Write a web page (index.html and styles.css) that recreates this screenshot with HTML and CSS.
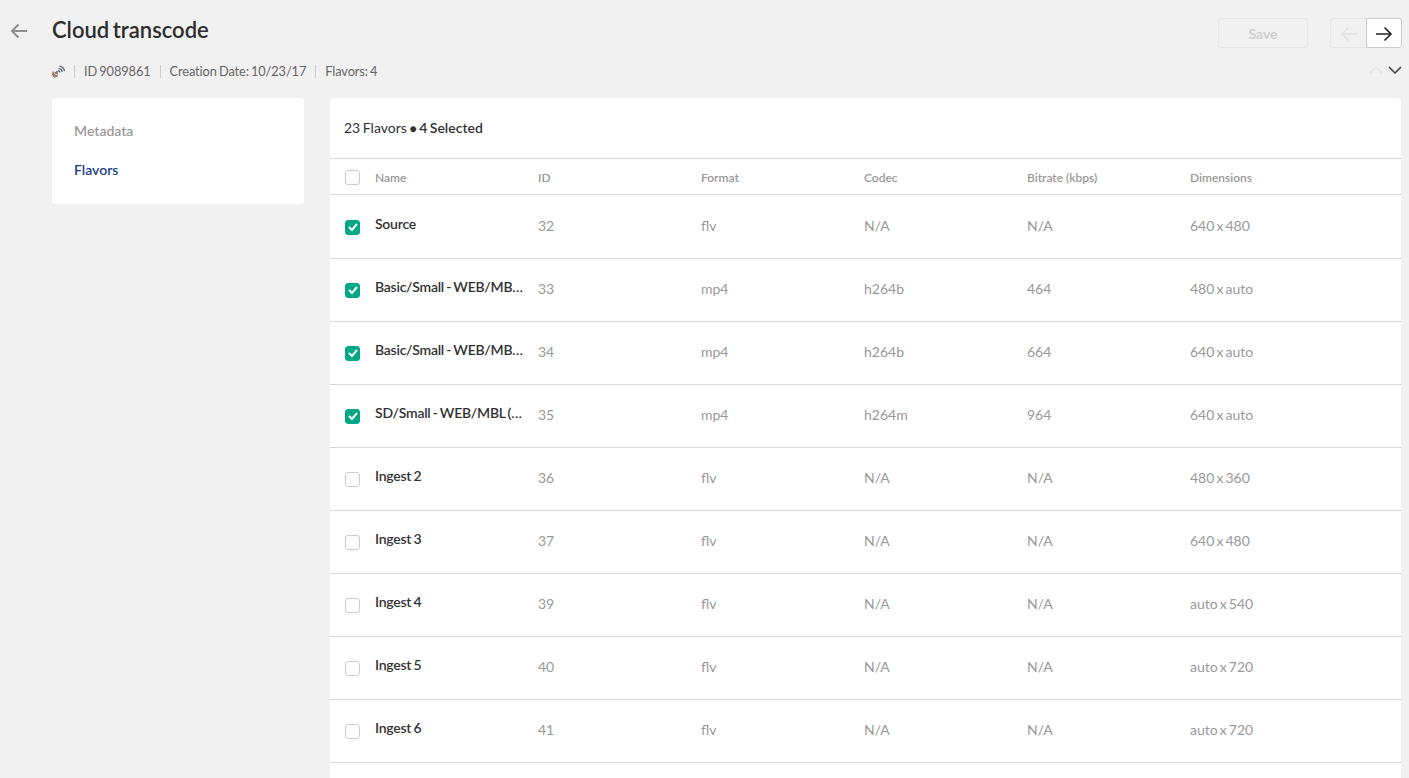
FILE: index.html
```html
<!DOCTYPE html>
<html lang="en">
<head>
    <meta charset="UTF-8">
    <title>Cloud transcode</title>
    <link rel="stylesheet" href="styles.css">
</head>
<body>
    <div class="page">
        <a class="back-link">
            <svg width="18" height="16" viewBox="0 0 18 16"><path d="M17 8H2M8.500 1.500 2 8l6.500 6.500" fill="none" stroke="#8f8f8f" stroke-width="2"/></svg>
        </a>
        <div class="content">
            <div class="top-bar">
                <div class="title-block">
                    <h1>Cloud transcode</h1>
                    <div class="meta">
                        <svg class="meta-icon" width="13" height="14" viewBox="0 0 13 14" fill="none" stroke-width="1.300">
                            <path d="M6 6.500A2.200 2.200 0 0 1 8 8.500M6.500 4.300A4.300 4.300 0 0 1 10.300 8M7.500 2A6.500 6.500 0 0 1 12.500 7" stroke="#5c6f85"/>
                            <path d="M1 7.500A4.500 4.500 0 0 0 5.500 12M.5 9.500A4 4 0 0 0 3.500 13.300M3 7.800A3 3 0 0 0 5.800 10" stroke="#8d6a50"/>
                            <circle cx="5" cy="8" r="1" fill="#666" stroke="none"/>
                        </svg>
                        <span class="sep"></span>
                        <span>ID 9089861</span>
                        <span class="sep"></span>
                        <span>Creation Date: 10/23/17</span>
                        <span class="sep"></span>
                        <span>Flavors: 4</span>
                    </div>
                </div>
                <div class="actions">
                    <div class="action-row">
                        <button class="btn-save">Save</button>
                        <div class="pager">
                            <button class="pager-btn">
                                <svg width="18" height="16" viewBox="0 0 18 16"><path d="M17 8H2M8.500 1.500 2 8l6.500 6.500" fill="none" stroke="#e4e4e4" stroke-width="2"/></svg>
                            </button>
                            <button class="pager-btn pager-active">
                                <svg width="18" height="16" viewBox="0 0 18 16"><path d="M1 8h15M9.500 1.500 16 8l-6.500 6.500" fill="none" stroke="#222" stroke-width="1.600"/></svg>
                            </button>
                        </div>
                    </div>
                    <div class="chevrons">
                        <svg width="14" height="8" viewBox="0 0 14 8"><path d="M1 7l6-6 6 6" fill="none" stroke="#e4e4e4" stroke-width="1.800"/></svg>
                        <svg width="14" height="8" viewBox="0 0 14 8"><path d="M1 1l6 6 6-6" fill="none" stroke="#444" stroke-width="1.600"/></svg>
                    </div>
                </div>
            </div>

            <div class="layout">
                <div class="side-nav">
                    <div class="nav-item">Metadata</div>
                    <div class="nav-item nav-current">Flavors</div>
                </div>
                <div class="panel">
                    <div class="panel-head">23 Flavors <span class="dot">●</span> <b>4 Selected</b></div>
                    <div class="row row-head">
                        <span class="box"></span>
                        <span>Name</span><span>ID</span><span>Format</span><span>Codec</span><span>Bitrate (kbps)</span><span>Dimensions</span>
                    </div>
                    <div class="row row-first">
                        <span class="box checked"><svg width="10" height="8" viewBox="0 0 10 8"><path d="M1 4l3 3 5-6" fill="none" stroke="#fff" stroke-width="2"/></svg></span>
                        <span class="name">Source</span><span>32</span><span>flv</span><span>N/A</span><span>N/A</span><span>640 x 480</span>
                    </div>
                    <div class="row">
                        <span class="box checked"><svg width="10" height="8" viewBox="0 0 10 8"><path d="M1 4l3 3 5-6" fill="none" stroke="#fff" stroke-width="2"/></svg></span>
                        <span class="name">Basic/Small - WEB/MBL (H264/400)</span><span>33</span><span>mp4</span><span>h264b</span><span>464</span><span>480 x auto</span>
                    </div>
                    <div class="row">
                        <span class="box checked"><svg width="10" height="8" viewBox="0 0 10 8"><path d="M1 4l3 3 5-6" fill="none" stroke="#fff" stroke-width="2"/></svg></span>
                        <span class="name">Basic/Small - WEB/MBL (H264/600)</span><span>34</span><span>mp4</span><span>h264b</span><span>664</span><span>640 x auto</span>
                    </div>
                    <div class="row">
                        <span class="box checked"><svg width="10" height="8" viewBox="0 0 10 8"><path d="M1 4l3 3 5-6" fill="none" stroke="#fff" stroke-width="2"/></svg></span>
                        <span class="name">SD/Small - WEB/MBL (H264/900)</span><span>35</span><span>mp4</span><span>h264m</span><span>964</span><span>640 x auto</span>
                    </div>
                    <div class="row">
                        <span class="box"></span>
                        <span class="name">Ingest 2</span><span>36</span><span>flv</span><span>N/A</span><span>N/A</span><span>480 x 360</span>
                    </div>
                    <div class="row">
                        <span class="box"></span>
                        <span class="name">Ingest 3</span><span>37</span><span>flv</span><span>N/A</span><span>N/A</span><span>640 x 480</span>
                    </div>
                    <div class="row">
                        <span class="box"></span>
                        <span class="name">Ingest 4</span><span>39</span><span>flv</span><span>N/A</span><span>N/A</span><span>auto x 540</span>
                    </div>
                    <div class="row">
                        <span class="box"></span>
                        <span class="name">Ingest 5</span><span>40</span><span>flv</span><span>N/A</span><span>N/A</span><span>auto x 720</span>
                    </div>
                    <div class="row">
                        <span class="box"></span>
                        <span class="name">Ingest 6</span><span>41</span><span>flv</span><span>N/A</span><span>N/A</span><span>auto x 720</span>
                    </div>
                    <div class="row-empty"></div>
                </div>
            </div>
        </div>
    </div>
</body>
</html>
```

FILE: styles.css
```css
html, body {
    height: 100%;
    overflow: hidden;
}
body {
    margin: 0;
    font-family: Lato, "Open Sans", sans-serif;
    color: #333;
    background-color: #f1f1f1;
}
.page {
    display: flex;
    padding: 0 7px 0 10px;
}
.back-link {
    width: 42px;
    flex: none;
    padding-top: 23px;
}
.content {
    flex: 1;
    min-width: 0;
}
.top-bar {
    display: flex;
    justify-content: space-between;
    height: 98px;
}
h1 {
    margin: 0;
    padding-top: 16px;
    font-size: 22px;
    line-height: 28px;
    font-weight: 600;
    word-spacing: -2px;
    color: #2d2d2d;
}
.meta {
    display: flex;
    align-items: center;
    gap: 9px;
    margin-top: 17px;
    font-size: 12.800px;
    line-height: 20px;
    word-spacing: -1px;
    letter-spacing: -0.100px;
    color: #666;
}
.meta-icon {
    flex: none;
}
.sep {
    width: 1px;
    height: 13px;
    background-color: #ccc;
}
.actions {
    padding-top: 18px;
}
.action-row {
    display: flex;
    gap: 22px;
}
.btn-save {
    width: 90px;
    height: 30px;
    border: 1px solid #e6e6e6;
    border-radius: 3px;
    background-color: #f1f1f1;
    font-family: inherit;
    font-size: 14px;
    font-weight: 600;
    color: #ccc;
    padding: 0;
}
.pager {
    display: flex;
}
.pager-btn {
    width: 36px;
    height: 30px;
    display: flex;
    align-items: center;
    justify-content: center;
    padding: 2px 0 0;
    border: 1px solid #e6e6e6;
    border-right: none;
    border-radius: 3px 0 0 3px;
    background-color: #f1f1f1;
}
.pager-active {
    background-color: #fff;
    border: 1px solid #ccc;
    border-radius: 0 3px 3px 0;
}
.chevrons {
    display: flex;
    justify-content: flex-end;
    gap: 5px;
    margin-top: 18px;
}
.layout {
    display: flex;
    gap: 26px;
    align-items: flex-start;
}
.side-nav {
    width: 252px;
    flex: none;
    box-sizing: border-box;
    height: 106px;
    padding: 13px 22px;
    background-color: #fff;
    border-radius: 3px;
}
.nav-item {
    font-size: 14px;
    line-height: 39px;
    font-weight: 600;
    color: #999;
}
.nav-current {
    color: #1f3d87;
}
.panel {
    flex: 1;
    min-width: 0;
    margin-right: 1px;
    background-color: #fff;
    border-radius: 3px 3px 0 0;
}
.panel-head {
    height: 61px;
    box-sizing: border-box;
    padding: 21px 14px 0;
    font-size: 14px;
    line-height: 18px;
    word-spacing: -1px;
    color: #333;
    border-bottom: 1px solid #d9d9d9;
}
.panel-head b {
    font-weight: 600;
}
.dot {
    font-size: 12px;
}
.row {
    display: grid;
    grid-template-columns: 30px repeat(5, 163px) 1fr;
    align-items: center;
    height: 63px;
    box-sizing: border-box;
    padding: 0 0 4px 15px;
    border-bottom: 1px solid #d9d9d9;
    font-size: 14px;
    word-spacing: -1.500px;
    color: #999;
}
.row-first {
    height: 64px;
    padding-top: 1px;
}
.row-head {
    height: 36px;
    padding: 2px 0 0 15px;
    font-size: 12px;
    font-weight: 600;
    word-spacing: 0;
    color: #999;
}
.row-empty {
    height: 15px;
}
.name {
    margin: 0 15px 4px 0;
    font-weight: 600;
    word-spacing: -1px;
    letter-spacing: -0.250px;
    color: #333;
    white-space: nowrap;
    overflow: hidden;
    text-overflow: ellipsis;
}
.box {
    width: 15px;
    height: 15px;
    box-sizing: border-box;
    border: 1px solid #ccc;
    border-radius: 3px;
    background-color: #fff;
    display: flex;
    align-items: center;
    justify-content: center;
}
.row:not(.row-head) .box {
    margin-top: 4px;
}
.checked {
    background-color: #00a784;
    border-color: #00a784;
}
```
